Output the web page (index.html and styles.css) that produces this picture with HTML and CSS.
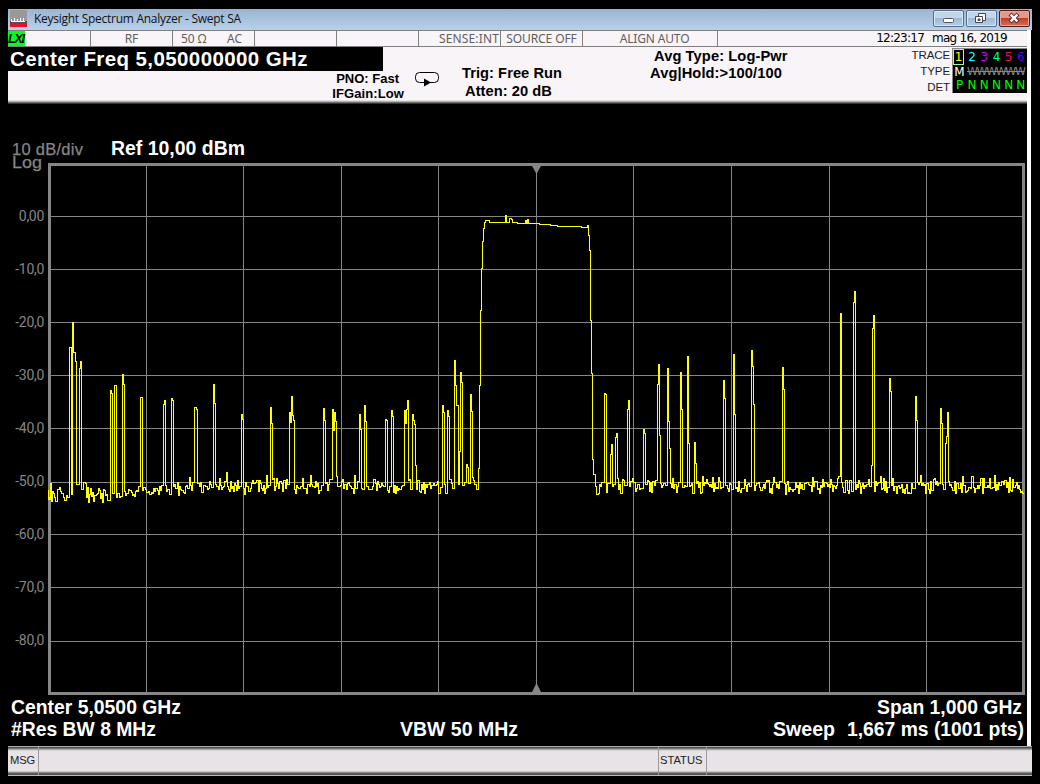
FILE: index.html
```
<!DOCTYPE html>
<html lang="en">
<head>
<meta charset="utf-8">
<title>Keysight Spectrum Analyzer - Swept SA</title>
<link rel="stylesheet" href="styles.css">
</head>
<body>
<div class="window">
  <div class="titlebar">
    <svg class="app-icon" width="17" height="17" viewBox="0 0 17 17" shape-rendering="crispEdges">
      <rect width="17" height="17" fill="#999"/>
      <rect y="11" width="17" height="3" fill="#505050"/>
      <path d="M1.500 9V12M4.500 8V12M7.500 9V12M10.500 8V12M13.500 8V12M1 11.500H15" stroke="#fff"/>
      <rect y="14" width="17" height="3" fill="#e8102c"/>
    </svg>
    <span class="title">Keysight Spectrum Analyzer - Swept SA</span>
    <div class="buttons">
      <div class="btn"><svg width="30" height="16" viewBox="0 0 30 16"><rect x="10.500" y="8.500" width="10" height="4" rx="1" fill="#fff" stroke="#556"/></svg></div>
      <div class="btn"><svg width="30" height="16" viewBox="0 0 30 16"><path d="M12.500 3.500h7v7h-7z" fill="#fff" stroke="#445"/><path d="M9.500 6.500h7v6h-7z" fill="#fff" stroke="#445"/><path d="M12 9h2v1.500h-2z" fill="#8fabc9" stroke="#445"/></svg></div>
      <div class="btn close"><svg width="30" height="16" viewBox="0 0 30 16"><path d="M12.500 5.500l5 5M17.500 5.500l-5 5" stroke="#533" stroke-width="4.200" stroke-linecap="square"/><path d="M12.500 5.500l5 5M17.500 5.500l-5 5" stroke="#fff" stroke-width="2.400" stroke-linecap="square"/></svg></div>
    </div>
  </div>
  <div class="main">
    <div class="cells">
      <div class="cell c1"><span class="lxi">LXI</span></div>
      <div class="cell c2">RF</div>
      <div class="cell c3"><span>50 Ω</span><span>AC</span></div>
      <div class="cell c2"></div>
      <div class="cell c2"></div>
      <div class="cell c6">SENSE:INT</div>
      <div class="cell c2 src">SOURCE OFF</div>
      <div class="cell c8">ALIGN AUTO</div>
      <div class="clock"><span>12:23:17</span><span>mag 16, 2019</span></div>
    </div>
    <div class="header">
      <div class="left">
        <div class="freq">Center Freq 5,050000000 GHz</div>
        <div class="pno"><span>PNO: Fast</span><span class="ifg">IFGain:Low</span></div>
      </div>
      <svg class="loop" width="26" height="16" viewBox="0 0 26 16">
        <rect x="1.500" y="1.500" width="23" height="10" rx="4" fill="none" stroke="#000"/>
        <path d="M10 7.500v8l7-4z" fill="#000"/>
      </svg>
      <div class="trig"><span>Trig: Free Run</span><span class="atten">Atten: 20 dB</span></div>
      <div class="avg"><span class="avgtype">Avg Type: Log-Pwr</span><span>Avg|Hold:&gt;100/100</span></div>
      <div class="tlabels"><span>TRACE</span><span>TYPE</span><span>DET</span></div>
      <div class="traces">
        <b class="t1">1</b><b class="t2">2</b><b class="t3">3</b><b class="t4">4</b><b class="t5">5</b><b class="t6">6</b>
        <b class="m">M</b><b class="w">WWWWWW</b>
        <b class="n">P</b><b class="n">N</b><b class="n">N</b><b class="n">N</b><b class="n">N</b><b class="n">N</b>
      </div>
    </div>
    <svg class="chart" width="1019" height="642" viewBox="8 104 1019 642">
      <g class="grid" shape-rendering="crispEdges">
        <path d="M146.500 164V693M243.500 164V693M341.500 164V693M438.500 164V693M536.500 164V693M633.500 164V693M731.500 164V693M829.500 164V693M926.500 164V693"/>
        <path d="M49 216.500H1024M49 269.500H1024M49 322.500H1024M49 375.500H1024M49 428.500H1024M49 482.500H1024M49 534.500H1024M49 587.500H1024M49 641.500H1024"/>
        <rect class="frame" x="49.500" y="164.500" width="974" height="529"/>
      </g>
      <path class="marker" d="M532 166h9l-4 7h-1zM532 692h9l-4-8h-1z"/>
      <path id="trace" shape-rendering="crispEdges"/>
      <g class="axis" text-anchor="end">
        <text x="44" y="221">0,00</text><text x="44" y="274">-10,0</text><text x="44" y="327">-20,0</text>
        <text x="44" y="380">-30,0</text><text x="44" y="433">-40,0</text><text x="44" y="486">-50,0</text>
        <text x="44" y="539">-60,0</text><text x="44" y="592">-70,0</text><text x="44" y="645">-80,0</text>
      </g>
      <g class="scale">
        <text x="12" y="155" textLength="71">10 dB/div</text>
        <text x="12" y="168" textLength="30" lengthAdjust="spacingAndGlyphs">Log</text>
      </g>
      <g class="big">
        <text x="111" y="155" textLength="134" lengthAdjust="spacingAndGlyphs">Ref 10,00 dBm</text>
        <text x="11" y="714" textLength="170" lengthAdjust="spacingAndGlyphs">Center 5,0500 GHz</text>
        <text x="11" y="736" textLength="145" lengthAdjust="spacingAndGlyphs">#Res BW 8 MHz</text>
        <text x="400" y="736" textLength="118" lengthAdjust="spacingAndGlyphs">VBW 50 MHz</text>
        <text x="877" y="714" textLength="145" lengthAdjust="spacingAndGlyphs">Span 1,000 GHz</text>
        <text x="773" y="736" textLength="62" lengthAdjust="spacingAndGlyphs">Sweep</text>
        <text x="847" y="736" textLength="177" lengthAdjust="spacingAndGlyphs">1,667 ms (1001 pts)</text>
      </g>
    </svg>
  </div>
  <div class="footer">
    <div class="msg">MSG</div><div class="msgtext"></div><div class="status">STATUS</div><div class="rest"></div>
  </div>
</div>
<script src="trace.js"></script>
</body>
</html>
```
FILE: styles.css
```
* { box-sizing: border-box; }
body { margin: 0; padding: 9px 8px 0; width: 1040px; height: 784px; overflow: hidden; background: #000; font-family: "Liberation Sans", Arial, sans-serif; }
span { white-space: nowrap; }
.window { width: 1024px; }
.titlebar { height: 21px; display: flex; align-items: flex-start; padding: 1px 2px 0 2px; background: linear-gradient(#9ab4d2, #b9d1ea); }
.app-icon { display: block; }
.title { margin-left: 7px; font: 12px/17px "Open Sans", "Noto Sans", sans-serif; letter-spacing: -0.27px; color: #111; }
.buttons { margin-left: auto; display: flex; gap: 2px; }
.btn { width: 31px; height: 17px; border: 1px solid #566d8c; border-radius: 2px; background: linear-gradient(#c4d6ea 0 45%, #9db7d3 46%, #b7cfe8); box-shadow: inset 0 0 0 1px #d9e6f4; overflow: hidden; }
.btn svg { display: block; margin: -1px 0 0 -1px; }
.close { border-color: #5a1a18; background: linear-gradient(#e09a88 0 45%, #c03a20 46%, #d4705a); box-shadow: inset 0 0 0 1px #e8a898; }
.main { width: 1023px; border-right: 4px solid #fff; }
.cells { height: 17px; display: flex; border-top: 1px solid #808080; border-bottom: 1px solid #808080; background: #f8f4f8; font: 12px/16px "Noto Sans", sans-serif; color: #606060; }
.cell { height: 15px; width: 82px; border-right: 1px solid #808080; white-space: nowrap; text-align: center; }
.c1 { width: 83px; text-align: left; }
.lxi { display: block; width: 17px; height: 15px; background: #00ff20; color: #000; font: italic bold 13px/15px "Liberation Sans", Arial, sans-serif; letter-spacing: -1.6px; }
.c3 { display: flex; justify-content: space-between; padding: 0 12px 0 8px; }
.c6 { text-align: right; padding-right: 1px; letter-spacing: 0.15px; }
.src { letter-spacing: -0.1px; }
.c8 { width: 135px; padding-left: 9px; letter-spacing: -0.15px; }
.clock { margin-left: auto; padding-right: 20px; color: #000; display: flex; gap: 8px; font: 12px/15px "DejaVu Sans", sans-serif; letter-spacing: -0.75px; }
.header { height: 57px; display: flex; background: linear-gradient(#f8f4f8 0 53px, #d0ccd0 54px, #909090 55px, #505050 56px, #181818 57px); }
.left { width: 406px; }
.freq { width: 375px; height: 24px; padding-left: 2px; background: #000; color: #fff; font-size: 20.500px; line-height: 24px; font-weight: bold; white-space: nowrap; letter-spacing: 0.4px; }
.pno { display: flex; flex-direction: column; width: 396px; font-size: 13px; line-height: 15px; font-weight: bold; align-items: flex-end; }
.pno span:first-child { margin-right: 5px; }
.ifg { letter-spacing: 0.1px; }
.loop { margin-top: 24px; }
.trig, .avg { display: flex; flex-direction: column; font-weight: bold; font-size: 14.670px; line-height: 18px; letter-spacing: 0.05px; }
.trig { margin-left: 22px; padding-top: 17px; width: 188px; }
.atten { margin-left: 3px; }
.avg { line-height: 17px; padding-top: 1px; width: 240px; letter-spacing: 0.1px; }
.avgtype { margin-left: 4px; }
.tlabels { width: 60px; display: flex; flex-direction: column; align-items: flex-end; font-size: 11.500px; line-height: 16px; color: #222; letter-spacing: -0.1px; }
.traces { margin-left: auto; margin-top: 1px; width: 75px; height: 45px; background: #000; border-left: 1px solid #888; border-top: 1px solid #888; display: grid; grid-template-columns: 13px repeat(5, 12.200px); grid-template-rows: 16px 14px 13px; text-align: center; overflow: hidden; }
.traces b { font: 12px/16px "DejaVu Sans", sans-serif; }
.traces .t1 { color: #ff0; border: 1px solid #9f9; width: 11px; height: 16px; line-height: 15px; }
.t2 { color: #2ff; } .t3 { color: #c0f; } .t4 { color: #0f8; } .t5 { color: #f05; } .t6 { color: #50f; }
.traces .m { color: #fff; line-height: 14px; }
.traces .w { grid-column: 2 / 7; text-align: left; color: #888; line-height: 14px; font-size: 11px; letter-spacing: -1.3px; padding-left: 1px; width: 58px; text-decoration: line-through; }
.traces .n { color: #0f0; line-height: 12px; }
.chart { display: block; background: #000; }
.grid path { stroke: #868686; fill: none; }
.frame { stroke: #868686; stroke-width: 3; fill: none; }
.marker { fill: #868686; }
#trace { fill: none; stroke: #ff0; }
.axis { fill: #858585; font: 14px Roboto, sans-serif; letter-spacing: -0.3px; }
.scale { fill: #868686; stroke: #868686; stroke-width: 0.25px; font-size: 16.500px; }
.big { fill: #fff; font-size: 19.600px; font-weight: bold; }
.footer { height: 30px; display: flex; border-top: 1px solid #aaa; border-bottom: 1px solid #bbb; background: linear-gradient(#404040, #888 2px, #c8c6c8 3px, #e7e3e7 4px 24px, #a0a0a0 25px, #404040 27px, #606060); font-size: 11.200px; line-height: 27px; color: #222; }
.footer div { border-right: 1px solid #999; }
.msg { width: 31px; padding-left: 2px; letter-spacing: -0.1px; }
.msgtext { width: 620px; }
.status { width: 48px; padding-left: 1px; }
.footer .rest { border: 0; }
```
FILE: trace.js
```
// Signal segments: x, level pairs in steps; the last number is the x where the noise floor resumes.
const segments = [
  [70,347,72,494,73,322,74,352,76,361,77],[80,368,81,361,82],[84,482,86],
  [111,390,112,393,113],[115,385,117],[123,374,124,384,125],[141,397,143],
  [164,404,165,400,166],[172,398,173,400,174],[190,477,191],[195,407,197,409,198],[214,384,215,403,216],
  [227,472,228],[242,414,243,419,244],[271,407,272,423,273],
  [290,412,291,422,292,396,293,415,294,420,295],[324,408,325,420,326],
  [333,409,334,430,335,412,336,421,337],[360,414,361,429,362],[365,405,366,421,367],
  [386,419,387,420,388],[392,410,393,416,394],[405,410,406,423,407,409,408,400,409],
  [413,414,414,420,415,424,416,465,417],
  [443,405,444,412,445],[448,410,449,416,450,479,452,483,453,488,455,360,456,385,457,405,459,484,460,451,461,372,462,382,463,485,465,482,467,464,468,467,469,483,471,394,472,411,473,477,474,480,475,484,477,489,479,468,480,385,481,310,482,268,483,241,484,228,485,222,486,220,490,222,506,215,507,222,510,218,512,219,513,222,518,223,526,220,527,223,528,219,529,223,540,224,551,225,558,226,582,227,588,225,589,235,590,250,591,320,592,373,593,459,594,474,596,486,597],
  [605,393,606,394,607],[611,454,612,444,613],[616,437,617,433,618,478,619],
  [628,409,629,400,630],[644,429,645,433,646],[658,384,659,364,660,435,661,483,662],
  [668,368,669,421,670,448,671],[681,372,682,409,683],[688,356,689,443,690],[695,442,696,463,697,483,698],
  [724,380,725,398,726],[734,354,735,414,736],[752,350,753,366,754,404,755],[783,367,784,389,785],
  [841,313,842],[854,302,855,291,856],[872,465,873,328,874,315,875],
  [890,378,891,391,892],[916,396,917,420,918],[941,408,942,423,943],
  [946,443,947,436,948,412,949],[995,475,996]
];

let seed = 20190;
const rnd = () => (seed = (seed * 16807) % 2147483647) / 2147483647;
const floorAt = x => x < 112 ? 493.5 : x < 175 ? 493 - (x - 112) * 0.05 : x < 185 ? 488 : 485.5;

let d = "M48.5 499.5V490";
let i = 0;
let x = 49;
while (x < 1025) {
  const s = segments[i];
  if (s && s[0] <= x + 1) {
    for (let k = 0; k + 1 < s.length; k += 2) d += `H${s[k] - 0.5}V${s[k + 1]}.5`;
    x = s[s.length - 1];
    i++;
  }
  const r = rnd();
  const calm = x > 112 && x < 175 ? 0.6 : 1;
  let off = (rnd() + rnd() - 1) * 9;
  if (r > 0.95) off = -11 + rnd() * 5;
  else if (r < 0.04) off = 7;
  d += `H${x - 0.5}V${Math.round(floorAt(x) + off * calm)}.5`;
  x += rnd() > 0.85 ? 2 : 1;
}
document.getElementById("trace").setAttribute("d", d + "H1024");
```
